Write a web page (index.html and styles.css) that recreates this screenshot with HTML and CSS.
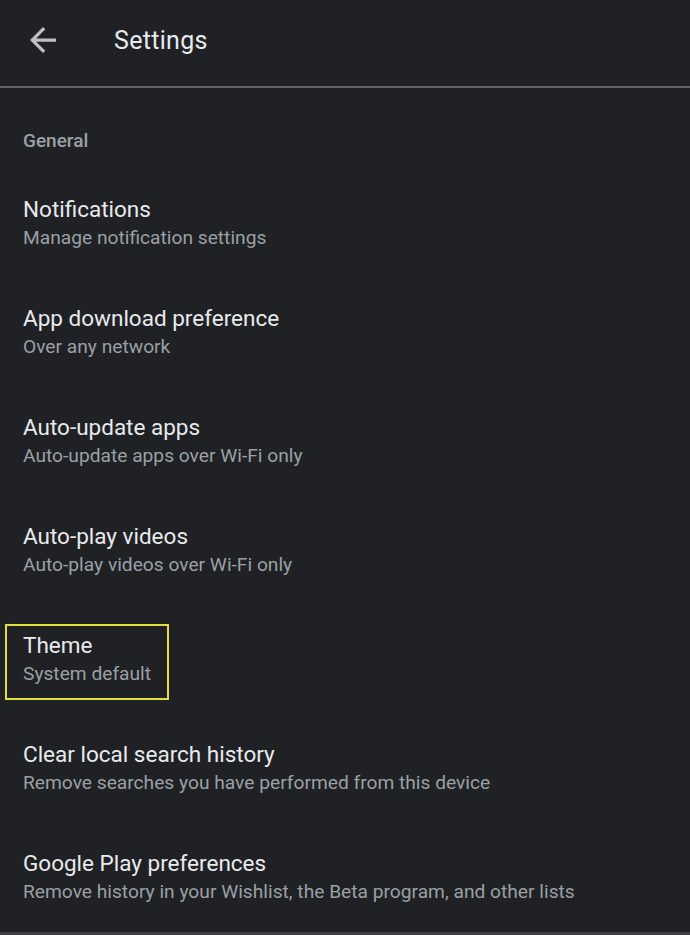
FILE: index.html
```html
<!DOCTYPE html>
<html>
<head>
<meta charset="utf-8">
<link rel="stylesheet" href="styles.css">
</head>
<body>
<div class="screen">
  <header class="topbar">
    <svg class="back" viewBox="4 4 16 16" width="26" height="26" aria-hidden="true">
      <path d="M20 11H7.83l5.59-5.59L12 4l-8 8 8 8 1.41-1.41L7.83 13H20v-2z" fill="currentColor"/>
    </svg>
    <h1 class="title">Settings</h1>
  </header>
  <main class="content">
    <div class="section">General</div>
    <div class="item"><div class="item-title">Notifications</div><div class="item-sub">Manage notification settings</div></div>
    <div class="item"><div class="item-title">App download preference</div><div class="item-sub">Over any network</div></div>
    <div class="item"><div class="item-title">Auto-update apps</div><div class="item-sub">Auto-update apps over Wi-Fi only</div></div>
    <div class="item"><div class="item-title">Auto-play videos</div><div class="item-sub">Auto-play videos over Wi-Fi only</div></div>
    <div class="item"><div class="highlight"><div class="item-title">Theme</div><div class="item-sub">System default</div></div></div>
    <div class="item"><div class="item-title">Clear local search history</div><div class="item-sub">Remove searches you have performed from this device</div></div>
    <div class="item"><div class="item-title">Google Play preferences</div><div class="item-sub">Remove history in your Wishlist, the Beta program, and other lists</div></div>
  </main>
  <div class="bottom-line"></div>
</div>
</body>
</html>
```
FILE: styles.css
```css
html, body {
  margin: 0;
  padding: 0;
  background: #202124;
}
body {
  font-family: Roboto, "Liberation Sans", sans-serif;
  color: #e8eaed;
}
.screen {
  width: 690px;
  height: 935px;
  display: flex;
  flex-direction: column;
  overflow: hidden;
}
.topbar {
  height: 86px;
  display: flex;
  align-items: center;
  border-bottom: 2px solid #5f6368;
  flex-shrink: 0;
}
.back {
  color: #bdc1c6;
  margin-left: 30px;
  margin-top: -6px;
  width: 26px;
  height: 26px;
}
.title {
  margin: 0 0 0 58px;
  margin-top: -5px;
  font-size: 25px;
  font-weight: 400;
  color: #e8eaed;
  letter-spacing: 0.3px;
}
.content {
  flex: 1;
  padding-left: 23px;
}
.section {
  font-size: 19px;
  line-height: 24px;
  color: #9aa0a6;
  padding-top: 41px;
  padding-bottom: 15px;
  font-weight: 500;
}
.item {
  height: 109px;
  box-sizing: border-box;
  padding-top: 27px;
}
.item-title {
  font-size: 22.5px;
  line-height: 28px;
  color: #e8eaed;
}
.item-sub {
  font-size: 19.2px;
  line-height: 28px;
  padding-top: 1px;
  color: #9aa0a6;
}
.highlight {
  display: inline-block;
  border: 2px solid #e3df3a;
  padding: 5px 16px 10px 16px;
  margin: -7px -18px -13px -18px;
}
.bottom-line {
  height: 3px;
  background: #3c4043;
  flex-shrink: 0;
}
```
